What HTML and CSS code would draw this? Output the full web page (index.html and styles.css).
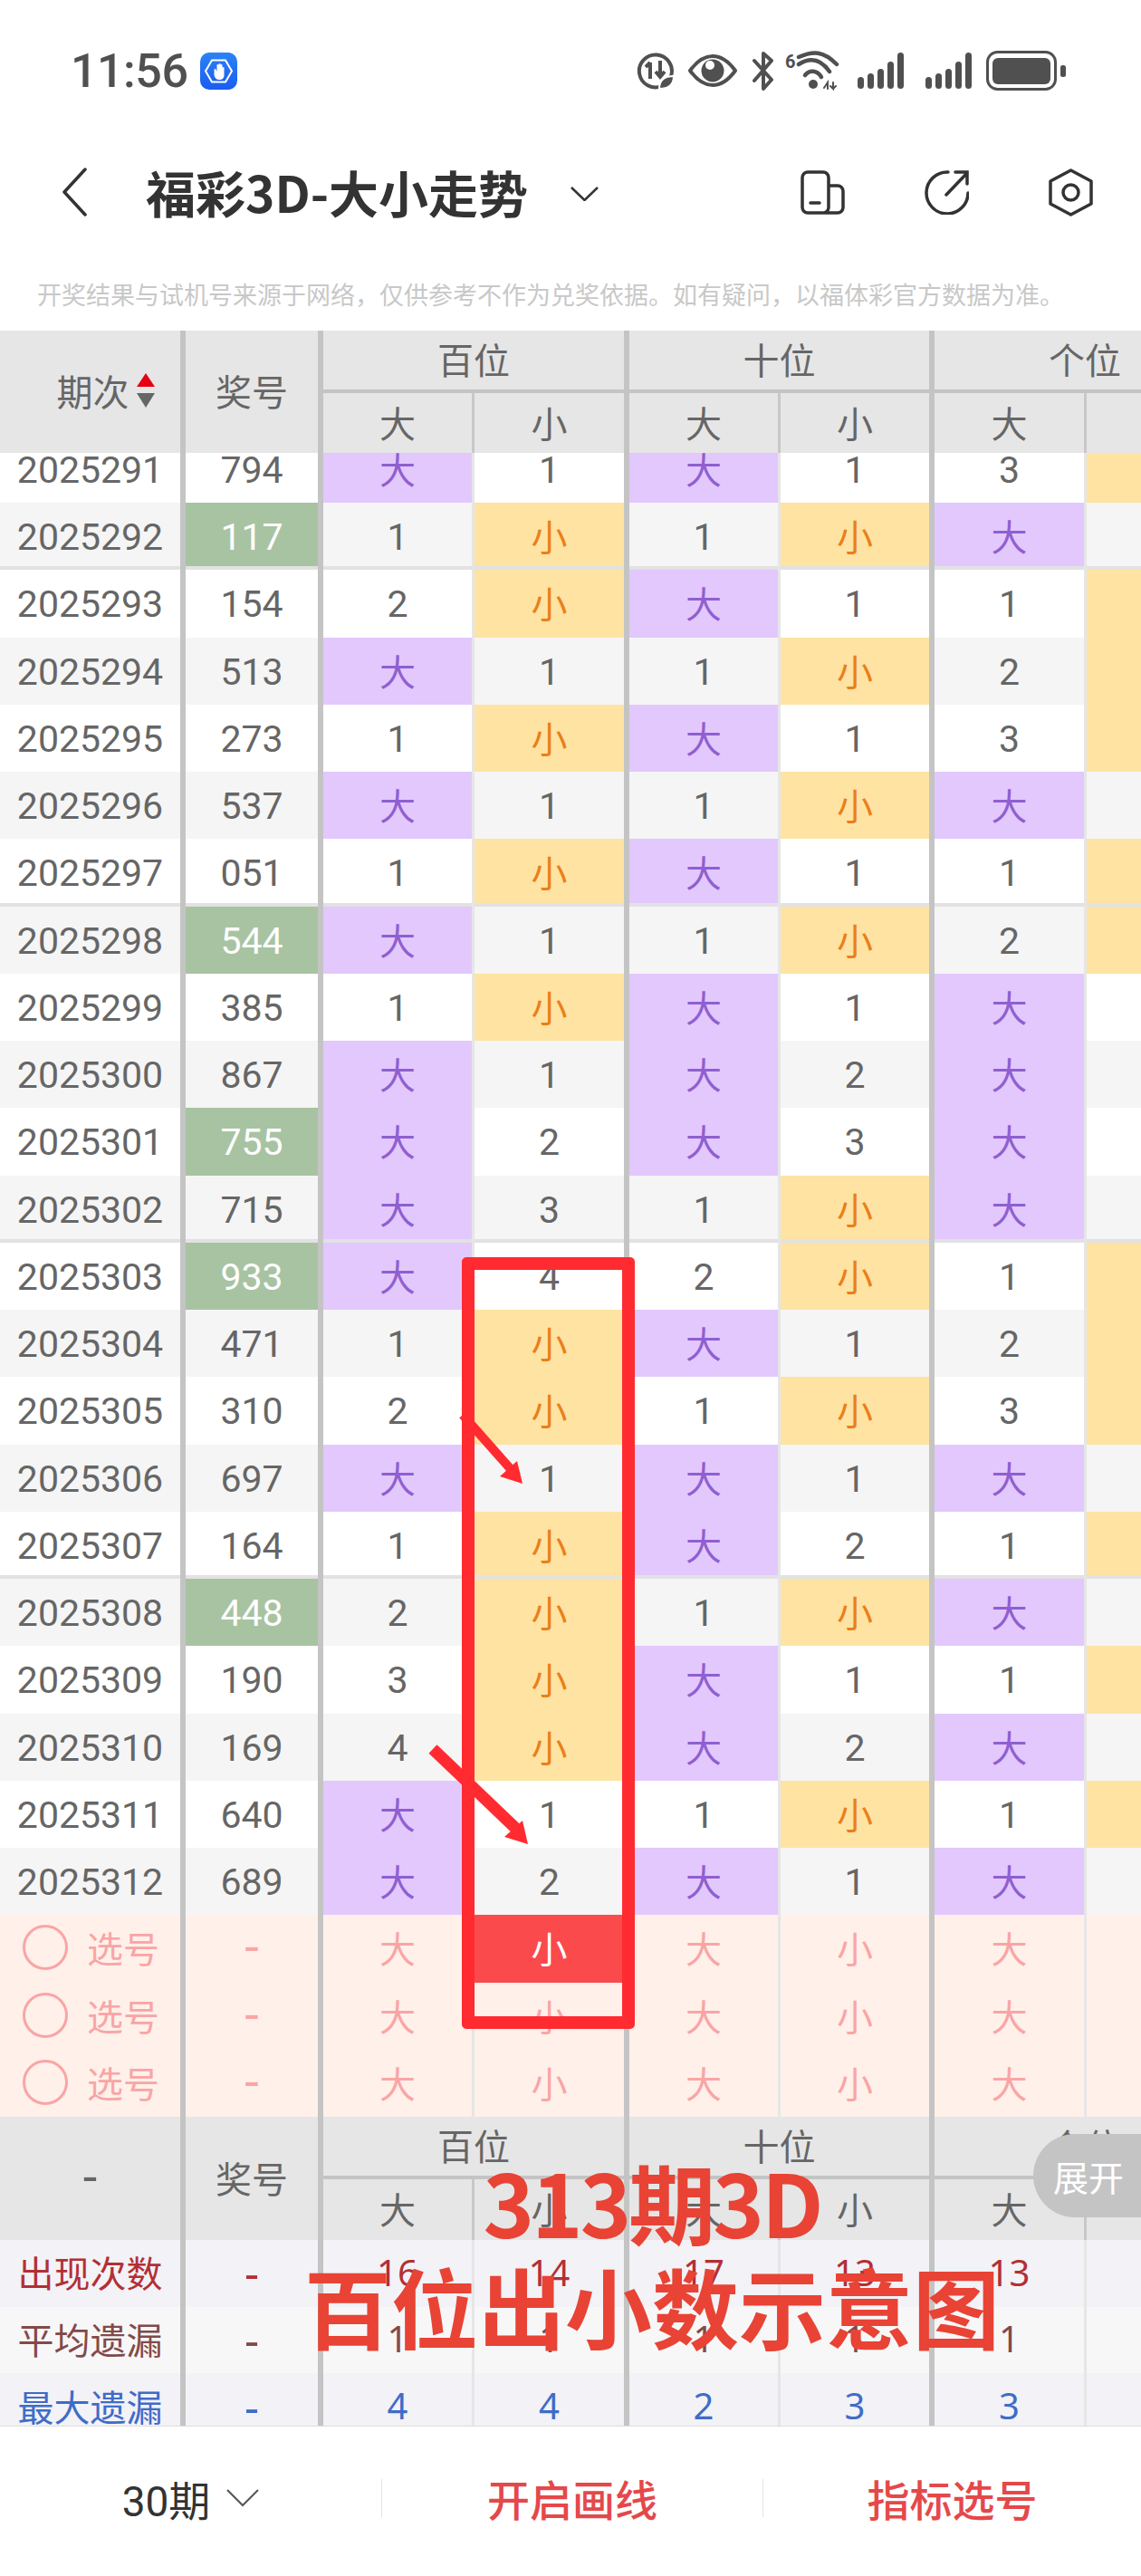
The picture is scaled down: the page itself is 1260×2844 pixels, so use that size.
FILE: index.html
```html
<!DOCTYPE html>
<html lang="zh-CN">
<head>
<meta charset="utf-8">
<title>福彩3D-大小走势</title>
<link rel="stylesheet" href="styles.css">
</head>
<body>
<div class="app">
  <header class="status">
    <div class="clock">11:56</div>
    <svg class="app-badge" viewBox="0 0 41 41">
      <defs><linearGradient id="bd" x1="0" y1="0" x2="0" y2="1"><stop offset="0" stop-color="#2b83f7"/><stop offset="1" stop-color="#1a5cf2"/></linearGradient></defs>
      <rect width="41" height="41" rx="10" fill="url(#bd)"/>
      <path d="M13 8.500h15l7 12-7 12H13l-7-12z" fill="none" stroke="#fff" stroke-width="2"/>
      <path d="M15.500 19v6c1 4 3 5 6 5 3 0 5-2 5-5v-8a1 1 0 0 0-2 0v3v-6a1 1 0 0 0-2 0v5v-6a1 1 0 0 0-2 0v6v-5a1 1 0 0 0-2 0v7l-1-2a1 1 0 0 0-2 0z" fill="#fff"/>
    </svg>
    <svg class="sys-icons" viewBox="0 0 474 44" fill="none" stroke="#505050">
      <g transform="translate(0 2)">
        <path d="M28 37a18 18 0 1 1 10-11" stroke-width="4" stroke-linecap="round"/>
        <path d="M15 29V11M10 16l5-5M26 9v18M21 21l5 6 5-6" stroke-width="4"/>
        <path d="M25 40c0-9 6-14 16-14 0 9-6 14-16 14z" fill="#505050" stroke="#fff" stroke-width="2"/>
      </g>
      <g transform="translate(57 4)">
        <path d="M2 18C10 7 18 2 27 2s17 5 25 16c-8 11-16 16-25 16S10 29 2 18z" stroke-width="4" stroke-linejoin="round"/>
        <circle cx="27" cy="18" r="12.500" fill="#505050" stroke="none"/>
        <circle cx="24" cy="12" r="5" fill="#fff" stroke="none"/>
      </g>
      <g transform="translate(127 1)">
        <path d="M3 10l19 21-9 10V24M13 19V2l9 8L3 32" stroke-width="4" stroke-linejoin="round" stroke-linecap="round"/>
      </g>
      <text class="wifi-six" x="164" y="19">6</text>
      <g transform="translate(177 1)" stroke-width="4.500" stroke-linecap="round">
        <path d="M2 6C18-1 29-1 44 14"/>
        <path d="M2 14C15 6 26 8 36 22"/>
        <path d="M9 26c5-6 13-6 18 2"/>
        <circle cx="18" cy="36" r="5" fill="#505050" stroke="none"/>
        <path d="M30 40l4-6v7M40 34v7l-3-3M40 41l3-3" stroke-width="2"/>
      </g>
      <g class="bars" fill="#505050" stroke="none">
        <rect x="244" y="29" width="7" height="13" rx="3.500"/><rect x="255" y="25" width="7" height="17" rx="3.500"/><rect x="266" y="20" width="7" height="22" rx="3.500"/><rect x="277" y="12" width="7" height="30" rx="3.500"/><rect x="288" y="2" width="7" height="40" rx="3.500"/>
        <rect x="319" y="29" width="7" height="13" rx="3.500"/><rect x="330" y="25" width="7" height="17" rx="3.500"/><rect x="341" y="20" width="7" height="22" rx="3.500"/><rect x="352" y="12" width="7" height="30" rx="3.500"/><rect x="363" y="2" width="7" height="40" rx="3.500"/>
      </g>
      <rect x="387.500" y="1.500" width="75" height="41" rx="11" stroke-width="3"/>
      <rect x="393" y="8" width="64" height="29" rx="6" fill="#505050" stroke="none"/>
      <rect x="468" y="16" width="6" height="13" rx="2.500" fill="#505050" stroke="none"/>
    </svg>
  </header>

  <nav class="nav">
    <svg class="back" viewBox="0 0 28 54"><path d="M26 2L3 27l23 25"/></svg>
    <h1 class="title">福彩3D-大小走势</h1>
    <svg class="caret" viewBox="0 0 31 16"><path d="M1 1l14.500 14L30 1"/></svg>
    <div class="nav-actions">
      <svg class="nav-icon" viewBox="0 0 49 49"><path d="M30 47H8a6 6 0 0 1-6-6V8a6 6 0 0 1 6-6h17a6 6 0 0 1 6 6v33a6 6 0 0 1-6 6zM31 17h10a6 6 0 0 1 6 6v18a6 6 0 0 1-6 6H30M11 36h10"/></svg>
      <svg class="nav-icon" viewBox="0 0 49 49"><path d="M26 2A23 23 0 1 0 48 25M24 27L47 3M34 2h13v13"/></svg>
      <svg class="nav-icon" viewBox="0 0 49 53"><path d="M24.500 2L47 14v25L24.500 51 2 39V14z" stroke-linejoin="round"/><circle cx="24.500" cy="26.500" r="8.500"/></svg>
    </div>
  </nav>

  <p class="notice">开奖结果与试机号来源于网络，仅供参考不作为兑奖依据。如有疑问，以福体彩官方数据为准。</p>

  <section class="head">
    <div class="hc span thick period-head">期次<span class="sort"><i class="up"></i><i class="down"></i></span></div>
    <div class="hc span thick">奖号</div>
    <div class="hc group thick">百位</div>
    <div class="hc group thick">十位</div>
    <div class="hc group">个位</div>
    <div class="hc thin">大</div><div class="hc thick">小</div>
    <div class="hc thin">大</div><div class="hc thick">小</div>
    <div class="hc thin">大</div><div class="hc"></div>
  </section>

  <main class="table">
    <div class="rows">
      <div class="row"><div>2025291</div><div>794</div><div class="b">大</div><div>1</div><div class="b">大</div><div>1</div><div>3</div><div class="x"></div></div>
      <div class="row end"><div>2025292</div><div class="g">117</div><div>1</div><div class="x">小</div><div>1</div><div class="x">小</div><div class="b">大</div><div></div></div>
      <div class="row"><div>2025293</div><div>154</div><div>2</div><div class="x">小</div><div class="b">大</div><div>1</div><div>1</div><div class="x"></div></div>
      <div class="row"><div>2025294</div><div>513</div><div class="b">大</div><div>1</div><div>1</div><div class="x">小</div><div>2</div><div class="x"></div></div>
      <div class="row"><div>2025295</div><div>273</div><div>1</div><div class="x">小</div><div class="b">大</div><div>1</div><div>3</div><div class="x"></div></div>
      <div class="row"><div>2025296</div><div>537</div><div class="b">大</div><div>1</div><div>1</div><div class="x">小</div><div class="b">大</div><div></div></div>
      <div class="row end"><div>2025297</div><div>051</div><div>1</div><div class="x">小</div><div class="b">大</div><div>1</div><div>1</div><div class="x"></div></div>
      <div class="row"><div>2025298</div><div class="g">544</div><div class="b">大</div><div>1</div><div>1</div><div class="x">小</div><div>2</div><div class="x"></div></div>
      <div class="row"><div>2025299</div><div>385</div><div>1</div><div class="x">小</div><div class="b">大</div><div>1</div><div class="b">大</div><div></div></div>
      <div class="row"><div>2025300</div><div>867</div><div class="b">大</div><div>1</div><div class="b">大</div><div>2</div><div class="b">大</div><div></div></div>
      <div class="row"><div>2025301</div><div class="g">755</div><div class="b">大</div><div>2</div><div class="b">大</div><div>3</div><div class="b">大</div><div></div></div>
      <div class="row end"><div>2025302</div><div>715</div><div class="b">大</div><div>3</div><div>1</div><div class="x">小</div><div class="b">大</div><div></div></div>
      <div class="row"><div>2025303</div><div class="g">933</div><div class="b">大</div><div>4</div><div>2</div><div class="x">小</div><div>1</div><div class="x"></div></div>
      <div class="row"><div>2025304</div><div>471</div><div>1</div><div class="x">小</div><div class="b">大</div><div>1</div><div>2</div><div class="x"></div></div>
      <div class="row"><div>2025305</div><div>310</div><div>2</div><div class="x">小</div><div>1</div><div class="x">小</div><div>3</div><div class="x"></div></div>
      <div class="row"><div>2025306</div><div>697</div><div class="b">大</div><div>1</div><div class="b">大</div><div>1</div><div class="b">大</div><div></div></div>
      <div class="row end"><div>2025307</div><div>164</div><div>1</div><div class="x">小</div><div class="b">大</div><div>2</div><div>1</div><div class="x"></div></div>
      <div class="row"><div>2025308</div><div class="g">448</div><div>2</div><div class="x">小</div><div>1</div><div class="x">小</div><div class="b">大</div><div></div></div>
      <div class="row"><div>2025309</div><div>190</div><div>3</div><div class="x">小</div><div class="b">大</div><div>1</div><div>1</div><div class="x"></div></div>
      <div class="row"><div>2025310</div><div>169</div><div>4</div><div class="x">小</div><div class="b">大</div><div>2</div><div class="b">大</div><div></div></div>
      <div class="row"><div>2025311</div><div>640</div><div class="b">大</div><div>1</div><div>1</div><div class="x">小</div><div>1</div><div class="x"></div></div>
      <div class="row"><div>2025312</div><div>689</div><div class="b">大</div><div>2</div><div class="b">大</div><div>1</div><div class="b">大</div><div></div></div>
    </div>

    <div class="row pick"><div><span class="radio"></span>选号</div><div class="dash">-</div><div>大</div><div class="on">小</div><div>大</div><div>小</div><div>大</div><div></div></div>
    <div class="row pick"><div><span class="radio"></span>选号</div><div class="dash">-</div><div>大</div><div>小</div><div>大</div><div>小</div><div>大</div><div></div></div>
    <div class="row pick"><div><span class="radio"></span>选号</div><div class="dash">-</div><div>大</div><div>小</div><div>大</div><div>小</div><div>大</div><div></div></div>

    <section class="head foot">
      <div class="hc span thick dash">-</div>
      <div class="hc span thick">奖号</div>
      <div class="hc group thick">百位</div>
      <div class="hc group thick">十位</div>
      <div class="hc group">个位</div>
      <div class="hc thin">大</div><div class="hc thick">小</div>
      <div class="hc thin">大</div><div class="hc thick">小</div>
      <div class="hc thin">大</div><div class="hc"></div>
    </section>

    <div class="row stat count"><div>出现次数</div><div class="dash">-</div><div>16</div><div>14</div><div>17</div><div>13</div><div>13</div><div></div></div>
    <div class="row stat avg"><div>平均遗漏</div><div class="dash">-</div><div>1</div><div>1</div><div>1</div><div>1</div><div>1</div><div></div></div>
    <div class="row stat max"><div>最大遗漏</div><div class="dash">-</div><div>4</div><div>4</div><div>2</div><div>3</div><div>3</div><div></div></div>
  </main>

  <footer class="bar">
    <div class="bar-item period-pick">30期<svg class="bar-caret" viewBox="0 0 36 20"><path d="M1 1l17 17L35 1"/></svg></div>
    <div class="bar-item action">开启画线</div>
    <div class="bar-item action">指标选号</div>
  </footer>

  <div class="mark-box"></div>
  <svg class="mark-arrows" viewBox="0 0 130 500">
    <path d="M41 12l60 68" class="shaft"/>
    <path d="M107 88l-25-8 19-17z" class="tip"/>
    <path d="M8 381l92 88" class="shaft wide"/>
    <path d="M113 486l-26-8 20-18z" class="tip"/>
  </svg>
  <div class="expand">展开</div>
  <div class="caption"><span class="caption-top">313期3D</span><br>百位出小数示意图</div>
</div>
</body>
</html>
```

FILE: styles.css
```css
* { box-sizing: border-box; }
html, body { margin: 0; padding: 0; background: #fff; }
body { font-family: Roboto, "Noto Sans CJK SC", sans-serif; color: #666; }
.app { position: relative; width: 1260px; height: 2844px; overflow: hidden; display: flex; flex-direction: column; }

.status { flex: none; height: 156px; display: flex; align-items: center; padding: 0 83px 0 78px; }
.clock { font-size: 52px; font-weight: 500; color: #505050; letter-spacing: -0.5px; }
.app-badge { width: 41px; height: 41px; margin-left: 14px; }
.sys-icons { width: 474px; height: 44px; margin-left: auto; }
.wifi-six { font: 700 20px Roboto, sans-serif; fill: #505050; stroke: none; }

.nav { flex: none; height: 112px; display: flex; align-items: center; padding: 0 53px 0 68px; }
.nav svg { fill: none; stroke: #333; }
.back { width: 28px; height: 54px; stroke-width: 3.500; stroke-linecap: round; stroke-linejoin: round; }
.title { margin: -3px 0 0 65px; font-size: 55px; line-height: 60px; font-weight: 700; color: #333; font-family: "Noto Sans CJK SC", sans-serif; white-space: nowrap; }
.caret { width: 31px; height: 16px; margin: 4px 0 0 47px; stroke-width: 2.500; }
.nav-actions { margin-left: auto; display: flex; align-items: center; gap: 88px; }
.nav-icon { width: 49px; height: auto; stroke-width: 3.500; stroke-linecap: round; }

.notice { flex: none; margin: 0; height: 97px; padding: 38px 0 0 41px; font-size: 27px; line-height: 42px; color: #c8c8c8; white-space: nowrap; }

.head { flex: none; display: grid; width: 1364px; height: 135px; grid-template-columns: 205px 152px 167px 171px 167px 170px 168px 164px; grid-template-rows: 69px 66px; background: #e6e6e6; }
.hc { display: flex; align-items: center; justify-content: center; font-size: 40px; color: #666; padding-bottom: 3px; }
.span { grid-row: span 2; }
.group { grid-column: span 2; box-shadow: inset 0 -4px 0 #c4c4c4; padding-bottom: 7px; }
.thick { border-right: 6px solid #c4c4c4; }
.thin { border-right: 3px solid #c8c8c8; }
.period-head { gap: 8px; padding-left: 34px; }
.sort { display: flex; flex-direction: column; gap: 7px; }
.sort i { display: block; width: 0; height: 0; border-left: 10px solid transparent; border-right: 10px solid transparent; }
.sort .up { border-bottom: 15px solid #e60012; }
.sort .down { border-top: 16px solid #666; }
.foot { grid-template-rows: 69px 67px; height: 136px; }

.table { flex: none; height: 2178px; overflow: hidden; width: 1260px; }
.rows { margin-top: -19.250px; }
.row { display: grid; width: 1364px; height: 74.250px; grid-template-columns: 205px 152px 167px 171px 167px 170px 168px 164px; font-size: 41px; background: #fff; }
.rows .row:nth-child(even) { background: #f5f5f5; }
.row > div { display: flex; align-items: center; justify-content: center; padding-top: 2px; }
.row > :nth-child(1), .row > :nth-child(2), .row > :nth-child(4), .row > :nth-child(6) { border-right: 6px solid #c4c4c4; }
.row > :nth-child(3), .row > :nth-child(5), .row > :nth-child(7) { border-right: 3px solid #e6e6e6; }
.row.end > div { box-shadow: inset 0 -4px 0 #e2e2e2; }
.row > .b { background: #e2c8fd; color: #8f5fd0; font-size: 40px; padding: 0 0 2px; }
.row > .x { background: #fee3a3; color: #ea7f1a; font-size: 40px; padding: 0 0 2px; }
.row > .g { background: #a8c3a2; color: #fff; }
.dash { font-size: 56px; }

.pick { background: #fff0ea; color: #f9a5a5; font-size: 40px; }
.row.pick > div { padding: 0 0 2px; }
.row.pick > :nth-child(1) { gap: 21px; padding-left: 2px; }
.row.pick > .dash { font-size: 56px; }
.radio { width: 50px; height: 50px; border: 3px solid #f9a5a5; border-radius: 50%; }
.row > .on { background: #fb4a4c; color: #fff; }

.stat { height: 73.670px; font-size: 40px; font-family: "Noto Sans", "Noto Sans CJK SC", sans-serif; }
.row.stat > div { padding: 0 0 3px; }
.row.stat > .dash { font-size: 50px; }
.count { background: #f2f2f7; color: #b32f34; }
.avg { background: #f7f7f8; color: #824a4a; }
.max { background: #f2f2f7; color: #3f6cc8; }

.bar { flex: 1; display: grid; grid-template-columns: 421px 421px 418px; border-top: 1px solid #ddd; align-items: center; padding-bottom: 8px; }
.bar-item { height: 42px; display: flex; align-items: center; justify-content: center; font-size: 47px; }
.bar-item + .bar-item { border-left: 1px solid #e4e4e4; }
.period-pick { color: #333; font-size: 46px; gap: 18px; }
.bar-caret { width: 36px; height: 20px; fill: none; stroke: #555; stroke-width: 2; }
.action { color: #e5484a; font-weight: 500; }

.mark-box { position: absolute; left: 510px; top: 1388px; width: 191px; height: 852px; border: 14px solid #ff2b30; border-radius: 5px; }
.mark-arrows { position: absolute; left: 470px; top: 1550px; width: 130px; height: 500px; }
.shaft { fill: none; stroke: #ff2b30; stroke-width: 10; }
.shaft.wide { stroke-width: 13; }
.tip { fill: #ff2b30; }
.expand { position: absolute; left: 1141px; top: 2356px; width: 119px; height: 92px; padding-left: 22px; display: flex; align-items: center; background: #c4c4c4; border-radius: 46px 0 0 46px; color: #fff; font-size: 39px; }
.caption { position: absolute; left: 320px; top: 2381px; width: 800px; text-align: center; font-family: "Noto Sans CJK SC", sans-serif; font-weight: 700; font-size: 96px; line-height: 109px; color: #e84335; }
.caption-top { position: relative; top: -6px; letter-spacing: -3px; }
```
